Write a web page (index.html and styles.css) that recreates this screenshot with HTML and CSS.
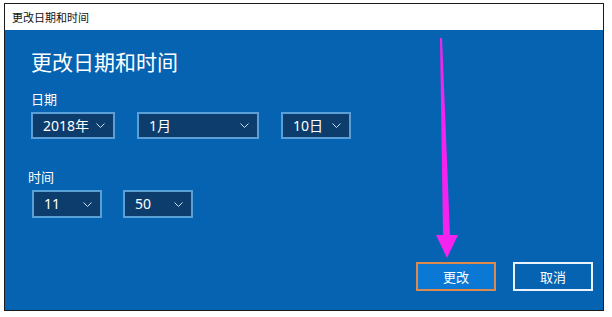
FILE: index.html
```html
<!DOCTYPE html>
<html lang="zh-CN">
<head>
<meta charset="utf-8">
<title>更改日期和时间</title>
<link rel="stylesheet" href="styles.css">
</head>
<body>
<div class="window">
  <div class="titlebar">更改日期和时间</div>
  <div class="content">
    <h1 class="heading">更改日期和时间</h1>
    <div class="label">日期</div>
    <div class="row row-date">
      <div class="select w-year"><span>2018年</span><svg class="chev" width="9" height="5" viewBox="0 0 9 5"><polyline points="0.5,0.5 4.5,4.5 8.5,0.5"/></svg></div>
      <div class="select w-month"><span>1月</span><svg class="chev" width="9" height="5" viewBox="0 0 9 5"><polyline points="0.5,0.5 4.5,4.5 8.5,0.5"/></svg></div>
      <div class="select w-day"><span>10日</span><svg class="chev" width="9" height="5" viewBox="0 0 9 5"><polyline points="0.5,0.5 4.5,4.5 8.5,0.5"/></svg></div>
    </div>
    <div class="label label-time">时间</div>
    <div class="row row-time">
      <div class="select w-small tall"><span>11</span><svg class="chev" width="9" height="5" viewBox="0 0 9 5"><polyline points="0.5,0.5 4.5,4.5 8.5,0.5"/></svg></div>
      <div class="select w-small tall"><span>50</span><svg class="chev" width="9" height="5" viewBox="0 0 9 5"><polyline points="0.5,0.5 4.5,4.5 8.5,0.5"/></svg></div>
    </div>
    <div class="buttons">
      <div class="btn btn-primary">更改</div>
      <div class="btn btn-cancel">取消</div>
    </div>
  </div>
  <svg class="arrow" width="612" height="317" viewBox="0 0 612 317">
    <polygon points="440,38 442,38 450,235 458,235 447,258 436,235 443,235"/>
  </svg>
</div>
</body>
</html>
```
FILE: styles.css
```css
html, body {
  margin: 0;
  padding: 0;
  background: #ffffff;
}
body {
  font-family: "Noto Sans", "Noto Sans CJK SC", sans-serif;
}
.window {
  margin: 3px 0 0 4px;
  width: 600px;
  height: 308px;
  box-sizing: border-box;
  border: 1px solid #1b1b1b;
  display: flex;
  flex-direction: column;
}
.titlebar {
  height: 26px;
  flex: none;
  background: #ffffff;
  color: #111;
  font-size: 11px;
  line-height: 12px;
  padding-left: 7px;
  display: flex;
  align-items: center;
  font-family: "Noto Sans CJK SC", sans-serif;
}
.content {
  flex: 1;
  background: #0563b2;
  color: #ffffff;
  padding: 20px 10px 19px 26px;
  display: flex;
  flex-direction: column;
}
.heading {
  margin: 0;
  font-size: 21px;
  line-height: 22px;
  font-weight: normal;
  font-family: "Noto Sans CJK SC", sans-serif;
}
.label {
  margin-top: 20px;
  font-size: 13px;
  line-height: 14px;
  font-family: "Noto Sans CJK SC", sans-serif;
}
.label-time {
  margin-top: 31px;
  margin-left: -3px;
}
.row {
  display: flex;
  margin-top: 6px;
}
.row-date { gap: 22px; }
.row-time { gap: 21px; margin-left: 1px; }
.select {
  height: 27px;
  box-sizing: border-box;
  border: 2px solid #5b9fd8;
  background: #0d3d6d;
  display: flex;
  align-items: center;
  justify-content: space-between;
  padding: 0 8px 0 10px;
  font-size: 14px;
  line-height: 16px;
}
.select.tall { height: 28px; }
.w-year { width: 84px; }
.w-month { width: 122px; }
.w-day { width: 70px; }
.w-small { width: 70px; }
.chev {
  display: block;
  flex: none;
}
.chev polyline {
  fill: none;
  stroke: #c9dff3;
  stroke-width: 1;
}
.buttons {
  margin-top: auto;
  display: flex;
  justify-content: flex-end;
  gap: 17px;
}
.btn {
  width: 80px;
  height: 29px;
  box-sizing: border-box;
  display: flex;
  align-items: center;
  justify-content: center;
  font-size: 13px;
  line-height: 14px;
  font-family: "Noto Sans CJK SC", sans-serif;
  color: #ffffff;
}
.btn-primary {
  border: 2px solid #dc8a4e;
  background: #0b78d6;
}
.btn-cancel {
  border: 2px solid #e8f3ff;
  background: #0563b2;
}
.arrow {
  position: absolute;
  left: 0;
  top: 0;
  pointer-events: none;
}
.arrow polygon {
  fill: #f423ef;
}
```
